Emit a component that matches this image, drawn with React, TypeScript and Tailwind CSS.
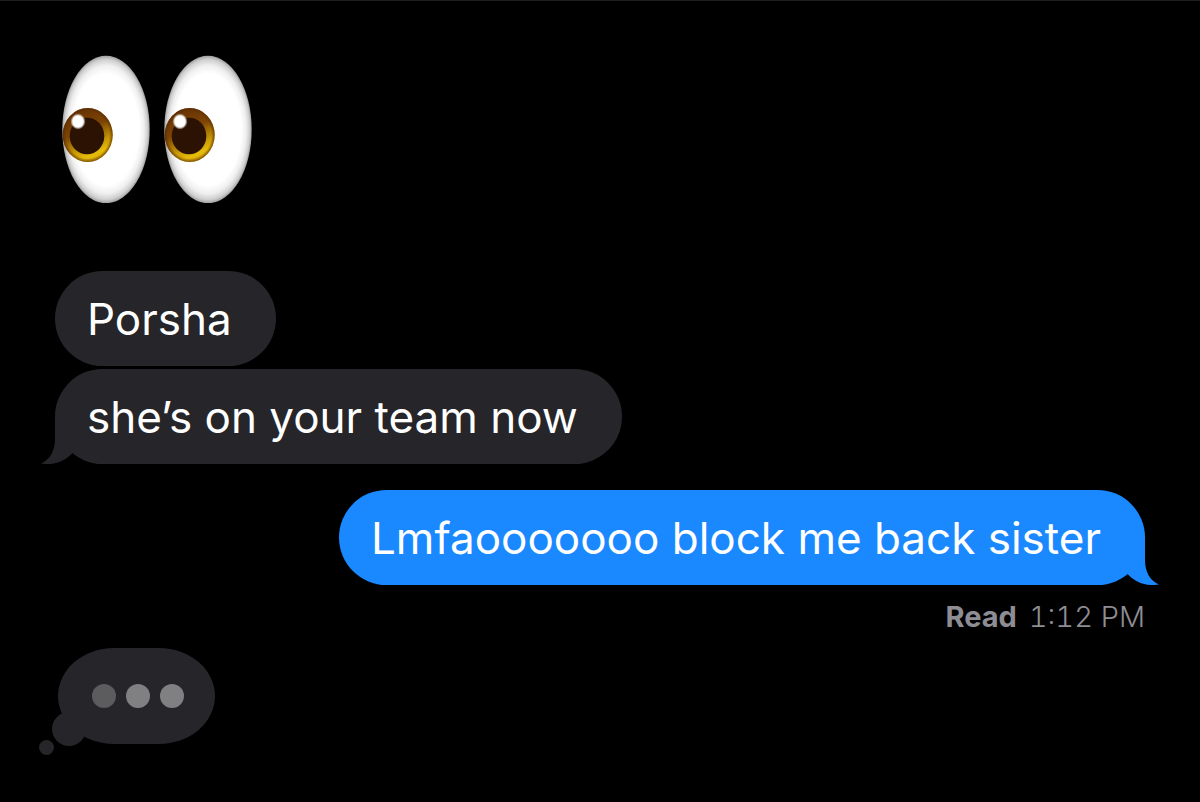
import { clsx } from 'clsx'

interface Message {
  id: number
  text: string
  sent?: boolean
  tail?: boolean
}

const received: Message[] = [
  { id: 1, text: 'Porsha' },
  { id: 2, text: 'she’s on your team now', tail: true },
]

const sent: Message[] = [
  { id: 3, text: 'Lmfaooooooo block me back sister', sent: true, tail: true },
]

function Eye({ x }: { x: number }) {
  return (
    <g transform={`translate(${x} 0)`}>
      <ellipse cx="44" cy="74.5" rx="43.7" ry="73.7" fill="url(#white)" />
      <ellipse cx="25.7" cy="80" rx="25" ry="27" fill="url(#iris)" />
      <ellipse cx="25.7" cy="80" rx="25" ry="27" fill="url(#irisEdge)" />
      <ellipse cx="25" cy="81" rx="17.3" ry="18.3" fill="#2b1202" />
      <ellipse cx="16" cy="66.5" rx="7.4" ry="7.9" fill="url(#glint)" />
    </g>
  )
}

function Eyes() {
  return (
    <svg className="block h-37 w-[190px]" viewBox="0 0 190 148" role="img" aria-label="Eyes emoji">
      <defs>
        <radialGradient id="white">
          <stop offset="0.76" stopColor="#ffffff" />
          <stop offset="0.87" stopColor="#efefef" />
          <stop offset="0.95" stopColor="#cfcfcf" />
          <stop offset="1" stopColor="#a0a0a0" />
        </radialGradient>
        <linearGradient id="iris" x1="0.3" y1="0" x2="0.7" y2="1">
          <stop offset="0" stopColor="#653003" />
          <stop offset="0.4" stopColor="#7c4504" />
          <stop offset="0.7" stopColor="#c99a06" />
          <stop offset="0.85" stopColor="#e6bd08" />
          <stop offset="1" stopColor="#d9a80c" />
        </linearGradient>
        <radialGradient id="irisEdge">
          <stop offset="0.86" stopColor="#5a2c05" stopOpacity="0" />
          <stop offset="1" stopColor="#5a2c05" stopOpacity="0.75" />
        </radialGradient>
        <radialGradient id="glint">
          <stop offset="0.7" stopColor="#ffffff" />
          <stop offset="1" stopColor="#ffffff" stopOpacity="0.1" />
        </radialGradient>
      </defs>
      <Eye x={0} />
      <Eye x={102} />
    </svg>
  )
}

function Tail({ sent }: { sent?: boolean }) {
  return (
    <svg
      className={clsx(
        'absolute bottom-0 h-12 w-10',
        sent ? '-right-3.5 -scale-x-100 text-[#1a88ff]' : '-left-3.5 text-[#26252a]'
      )}
      viewBox="0 0 40 48"
      fill="currentColor"
      aria-hidden="true"
    >
      <path d="M14 0 V23 C14 34 9.5 43.5 0 47.5 C12 49.5 23 46 31 37.5 L40 20 V0 Z" />
    </svg>
  )
}

function Bubble({ text, sent, tail }: Message) {
  return (
    <div
      className={clsx(
        'relative rounded-[48px] pt-4 pr-11 pb-[15px] pl-8 text-[44px] leading-16 text-white',
        sent ? 'self-end bg-[#1a88ff]' : 'self-start bg-[#26252a]'
      )}
    >
      {tail && <Tail sent={sent} />}
      <p className="relative">{text}</p>
    </div>
  )
}

function TypingIndicator() {
  return (
    <div
      className="relative ml-[3px] flex h-24 w-[157px] items-center justify-center gap-[10px] self-start rounded-[56px/48px] bg-[#26252a] pl-[3px]"
      role="status"
      aria-label="Typing"
    >
      <span className="absolute -bottom-0.5 -left-1.5 size-[34px] rounded-full bg-[#26252a]" />
      <span className="absolute -bottom-[11px] -left-[19px] size-[15px] rounded-full bg-[#26252a]" />
      <span className="size-6 rounded-full bg-[#5c5c5e]" />
      <span className="size-6 rounded-full bg-[#808083]" />
      <span className="size-6 rounded-full bg-[#808083]" />
    </div>
  )
}

export default function App() {
  return (
    <main className="flex min-h-screen flex-col border-t border-[#1f1f1f] bg-black px-[55px] pt-[54px] pb-12 font-['Inter','Liberation_Sans',sans-serif]">
      <div className="pl-[7px]">
        <Eyes />
      </div>

      <section className="mt-17 flex flex-col gap-[3px]">
        {received.map(m => <Bubble key={m.id} {...m} />)}
      </section>

      <section className="mt-[26px] flex flex-col gap-[3px]">
        {sent.map(m => <Bubble key={m.id} {...m} />)}
      </section>

      <p className="mt-3 flex gap-3 self-end text-[29px] leading-10 text-[#8d8d93]">
        <span className="font-bold">Read</span>
        <time className="font-light tabular-nums">1:12 PM</time>
      </p>

      <section className="mt-[11px] flex flex-col">
        <TypingIndicator />
      </section>
    </main>
  )
}
